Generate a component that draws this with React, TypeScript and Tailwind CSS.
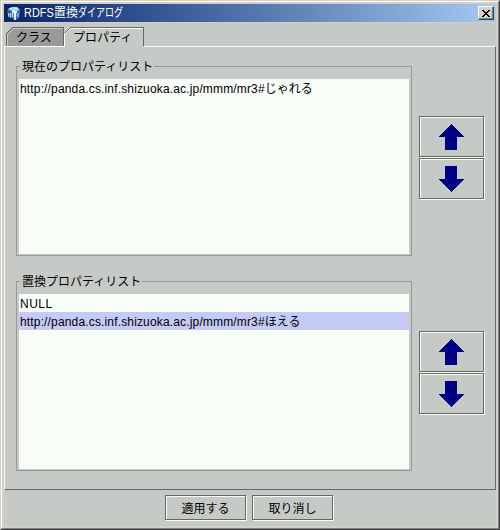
import React from "react";

const jp = "font-['Liberation_Sans','Noto_Sans_CJK_JP',sans-serif]";
const etched = "border border-[#636863] shadow-[inset_1px_1px_0_#f8fdf8,1px_1px_0_#f8fdf8]";

function AppIcon() {
  return (
    <svg width="14" height="14" viewBox="0 0 14 14" className="shrink-0">
      <path d="M1 3L5 1h5l3 3-1 8-4 2-3-2-4-1z" fill="#3f78ae" />
      <path d="M1 3l4-2h5l3 3-3 2-5-1z" fill="#a9d4ee" />
      <path d="M0 4l4 1v6l-3-1z" fill="#2a62a0" />
      <path d="M10 5l3-1-1 7-2 2z" fill="#336ea8" />
      <path d="M5 4l5 1v2H5z" fill="#d3e9f8" />
      <path d="M7 5h2v9H7z" fill="#e9f5fc" />
      <path d="M1.500 10.500V7.500l1 1 1-1v4M5.500 7v4M11.500 7l-1 2 1 2" fill="none" stroke="#c4def0" strokeWidth="1" />
      <path d="M3 2h2v1H3zM8 2h2v1H8z" fill="#f2fafe" />
    </svg>
  );
}

function Tab({ label, active, width, pad }: { label: string; active?: boolean; width: string; pad: string }) {
  return (
    <div className={`relative ${width} ${active ? "h-[20px]" : "h-[19px]"}`}>
      <svg width="100%" height="100%" className="absolute inset-0" shapeRendering="crispEdges">
        {active ? (
          <>
            <path d="M0 20V6L6 0H80V20z" fill="#c6cac6" />
            <path d="M.5 6.5L6.5 .5H79.5V19" fill="none" stroke="#636863" />
            <path d="M.5 20V7.5L6.5 1.5H79" fill="none" stroke="#f8fdf8" />
          </>
        ) : (
          <>
            <path d="M.5 19V6.5L6.5 .5H57.5V19" fill="#9a9a9a" stroke="#636863" />
            <path d="M1.5 19V7.5L7.5 1.5H57" fill="none" stroke="#c6cac6" />
          </>
        )}
      </svg>
      <span className={`relative block whitespace-nowrap leading-[22px] ${pad}`}>{label}</span>
    </div>
  );
}

function Arrow({ down }: { down?: boolean }) {
  return (
    <svg width="26" height="26" viewBox="0 0 26 26" shapeRendering="crispEdges">
      <path d={down ? "M13 26L26 13H19V0H7V13H0z" : "M13 0L26 13H19V26H7V13H0z"} fill="#000084" />
    </svg>
  );
}

function ArrowButtons() {
  return (
    <div className="flex flex-col gap-px">
      <button className={`flex h-[41px] w-[65px] items-start pl-[18px] pt-[7px] ${etched}`}>
        <Arrow />
      </button>
      <button className={`flex h-[41px] w-[65px] items-start pl-[18px] pt-[7px] ${etched}`}>
        <Arrow down />
      </button>
    </div>
  );
}

function ListPanel({ title, rows, selected }: { title: string; rows: [string, string][]; selected?: number }) {
  return (
    <div className="flex gap-[7px]">
      <fieldset className="h-[197px] w-[396px] min-w-0 border border-[#969a96] px-[2px] pb-[2px]">
        <legend className="ml-[1px] h-[15px] whitespace-nowrap pl-[2px] pr-px leading-[17px]">{title}</legend>
        <div className="mt-[5px] h-[175px] bg-[#f8fdf8]">
          {rows.map(([ascii, kana], i) => (
            <div key={i} className={`h-[18px] whitespace-nowrap pl-px leading-[20px] ${i === selected ? "bg-[#c6caf7]" : ""}`}>
              <span className={kana ? "tracking-[0.155px]" : "tracking-[0.5px]"}>{ascii}</span>
              <span>{kana}</span>
            </div>
          ))}
        </div>
      </fieldset>
      <div className="pt-[57px]">
        <ArrowButtons />
      </div>
    </div>
  );
}

export default function App() {
  return (
    <div className={`h-[530px] w-[500px] overflow-hidden border border-b-[#404040] border-l-[#d4d0c8] border-r-[#404040] border-t-[#d4d0c8] text-[12px] text-black ${jp}`}>
      <div className="flex h-full flex-col border border-b-[#808080] border-l-white border-r-[#808080] border-t-white bg-[#d4d0c8] p-[2px]">
        <div className="flex h-[18px] shrink-0 items-center bg-gradient-to-r from-[#0a246a] to-[#a6caf0] pl-[3px] pr-[2px] text-white">
          <AppIcon />
          <span className="ml-[3px] flex grow whitespace-nowrap leading-[20px]">
            <span className="w-[30px] origin-left scale-x-[0.91]">RDFS</span>
            <span>置換</span>
            <span className="w-[60px] origin-left scale-x-[0.75]">ダイアログ</span>
          </span>
          <button className="flex h-[14px] w-[16px] items-center justify-center border border-b-[#404040] border-l-white border-r-[#404040] border-t-white bg-[#d4d0c8] shadow-[inset_-1px_-1px_0_#808080]">
            <svg width="8" height="7" viewBox="0 0 8 7" shapeRendering="crispEdges">
              <path d="M0 0h2v1h1v1h2V1h1V0h2v1H7v1H6v1H5v1h1v1h1v1h1v1H6V6H5V5H3v1H2v1H0V6h1V5h1V4h1V3H2V2H1V1H0z" fill="#000" />
            </svg>
          </button>
        </div>
        <div className="mt-px flex grow flex-col bg-[#c6cac6]">
          <div className="z-10 flex h-[23px] items-start pl-[2px] pt-[4px]">
            <Tab label="クラス" width="w-[58px]" pad="pl-[10px]" />
            <Tab label="プロパティ" active width="w-[80px]" pad="pl-[9px]" />
          </div>
          <div className="h-[444px] border border-b-[#636863] border-l-[#f8fdf8] border-r-[#636863] border-t-[#f8fdf8] pl-[11px] pt-[12px]">
            <div className="flex flex-col gap-[18px]">
              <ListPanel
                title="現在のプロパティリスト"
                rows={[["http://panda.cs.inf.shizuoka.ac.jp/mmm/mr3#", "じゃれる"]]}
              />
              <ListPanel
                title="置換プロパティリスト"
                rows={[["NULL", ""], ["http://panda.cs.inf.shizuoka.ac.jp/mmm/mr3#", "ほえる"]]}
                selected={1}
              />
            </div>
          </div>
          <div className="flex gap-[6px] pl-[161px] pt-[5px]">
            <button className={`h-[25px] w-[81px] pt-[2px] ${etched}`}>適用する</button>
            <button className={`h-[25px] w-[81px] pt-[2px] ${etched}`}>取り消し</button>
          </div>
        </div>
      </div>
    </div>
  );
}
